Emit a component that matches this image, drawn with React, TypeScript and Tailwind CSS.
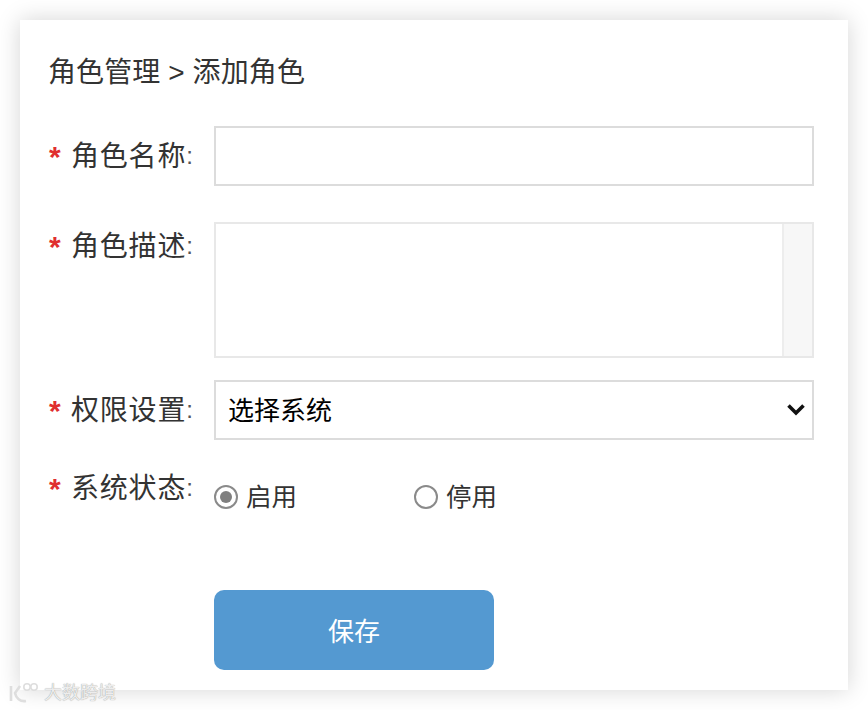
import React from "react";

const font = "font-['Liberation_Sans','Noto_Sans_CJK_SC',sans-serif]";

function Label({ text, className = "" }: { text: string; className?: string }) {
  return (
    <div className={`w-[165px] shrink-0 flex items-start text-[28px] leading-[40px] text-[#333] ${className}`}>
      <span className="w-[22px] text-[#e02f2f] text-[30px] font-bold leading-[40px]">*</span>
      <span className="tracking-[0.8px]">{text}</span>
      <span className="-translate-y-[1px] text-[24px] text-[#555]">:</span>
    </div>
  );
}

function Radio({ checked, label, className = "" }: { checked?: boolean; label: string; className?: string }) {
  return (
    <label className={`flex items-center gap-[8px] text-[25.5px] leading-[36px] text-[#333] ${className}`}>
      <input type="radio" name="status" defaultChecked={checked} className="peer sr-only" />
      <span className="w-[24px] h-[24px] rounded-full border-2 border-[#8a8a8a] bg-white flex items-center justify-center">
        {checked && <span className="w-[12px] h-[12px] rounded-full bg-[#7f7f7f]" />}
      </span>
      {label}
    </label>
  );
}

export default function App() {
  return (
    <div className={`${font} w-[868px] h-[710px] bg-white p-[20px] relative overflow-hidden`}>
      <div className="w-[828px] h-[670px] bg-white shadow-[0_0_22px_rgba(0,0,0,0.17)] pl-[29px] pr-[34px] pt-[33px]">
        <h1 className="-ml-[1px] text-[28px] leading-[40px] text-[#333] font-normal tracking-[0.1px]">角色管理 &gt; 添加角色</h1>

        <div className="flex items-start mt-[33px]">
          <Label text="角色名称" className="pt-[11px]" />
          <input className="w-[600px] h-[60px] border-2 border-[#dcdcdc] bg-white outline-none" />
        </div>

        <div className="flex items-start mt-[36px]">
          <Label text="角色描述" className="pt-[5px]" />
          <div className="w-[600px] h-[136px] border-2 border-[#e8e8e8] flex bg-white">
            <textarea className="flex-1 resize-none outline-none bg-white" />
            <div className="w-[30px] bg-[#f7f7f7] border-l-2 border-[#ededed]" />
          </div>
        </div>

        <div className="flex items-start mt-[22px]">
          <Label text="权限设置" className="pt-[11px]" />
          <div className="relative w-[600px] h-[60px]">
            <select className="w-full h-full appearance-none border-2 border-[#dcdcdc] bg-white pl-[12px] pt-[3px] text-[26px] text-black outline-none rounded-none">
              <option>选择系统</option>
            </select>
            <svg className="absolute right-[8px] top-[23px] pointer-events-none" width="20" height="13" viewBox="0 0 20 13" fill="none">
              <path d="M2.5 2.5 10 10l7.5-7.5" stroke="#111" strokeWidth="3.6" />
            </svg>
          </div>
        </div>

        <div className="flex items-start mt-[28px]">
          <Label text="系统状态" className="pt-[1px]" />
          <div className="flex items-center pt-[11px]">
            <Radio checked label="启用" className="w-[200px]" />
            <Radio label="停用" />
          </div>
        </div>

        <div className="pl-[165px] mt-[75px]">
          <button className="w-[280px] h-[80px] rounded-[10px] bg-[#5499d1] text-white text-[26px] pt-[4px]">保存</button>
        </div>
      </div>

      <div className="absolute left-[8px] top-[681px] flex items-center gap-[3px] text-[#ededed] text-[18px] leading-[24px] [text-shadow:0_0_1px_#888]">
        <svg width="34" height="24" viewBox="0 0 34 24" fill="none" stroke="#dedede" strokeWidth="2.6">
          <path d="M3 5v15" />
          <path d="M12 5 7 12c1 5 5 9 11 8" />
          <circle cx="19" cy="6" r="3.2" strokeWidth="1.6" />
          <circle cx="26" cy="6" r="3.2" strokeWidth="1.6" />
        </svg>
        <span className="-ml-[1px]">大数跨境</span>
      </div>
    </div>
  );
}
